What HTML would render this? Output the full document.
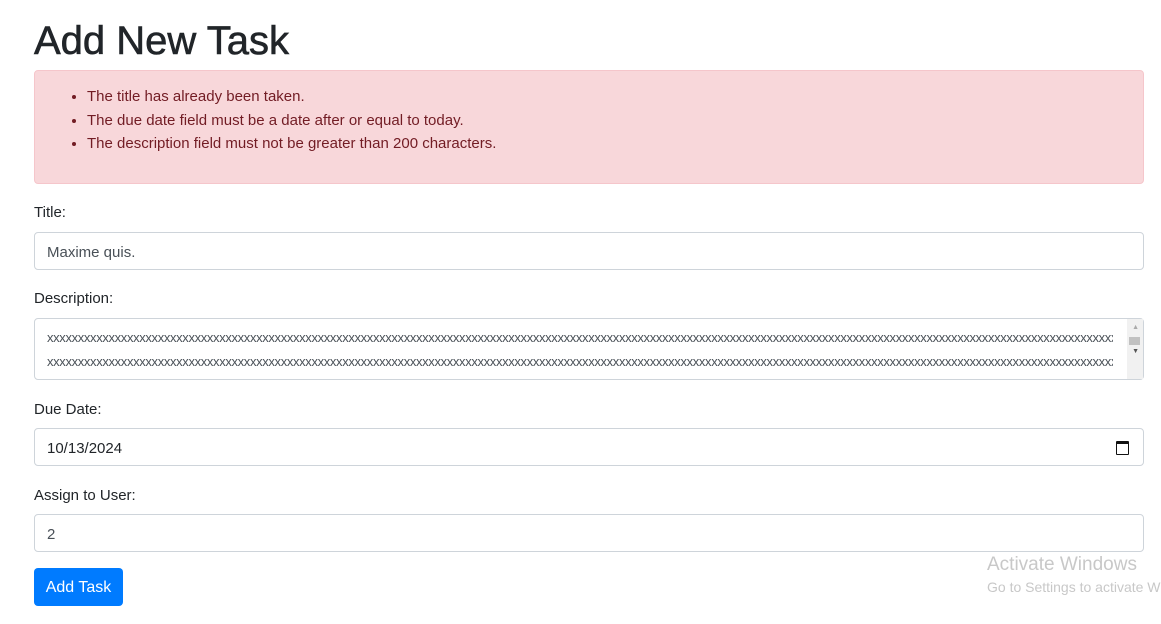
<!DOCTYPE html>
<html><head><style>
body{margin:0;background:#fff;font-family:"Liberation Sans",sans-serif;color:#212529;width:1161px;height:624px;overflow:hidden;position:relative}
.a{position:absolute}
h1{position:absolute;left:34px;top:15px;margin:0;font-size:40px;font-weight:500;line-height:52px;-webkit-text-stroke:0.6px #212529}
.alert{left:34px;top:70px;width:1108px;height:112px;background:#f8d7da;border:1px solid #f5c6cb;border-radius:4px;color:#721c24;font-size:15px}
.alert ul{margin:0;padding:0 0 0 52px;position:absolute;top:14px}
.alert li{line-height:23.5px}
.lbl{left:34px;font-size:15px}
.inp{left:34px;width:1110px;border:1px solid #ced4da;border-radius:4px;background:#fff;font-size:15px;color:#495057;box-sizing:border-box}
.btn{left:34px;top:568px;width:89px;height:38px;background:#007bff;border-radius:4px;color:#fff;font-size:16px;line-height:40px;text-align:center}
.xx{white-space:nowrap;overflow:hidden;width:1066px;font-size:13px;letter-spacing:-0.35px;color:#495057;position:absolute;left:12px}
</style></head><body>
<h1>Add New Task</h1>
<div class="a alert"><ul><li>The title has already been taken.</li><li>The due date field must be a date after or equal to today.</li><li>The description field must not be greater than 200 characters.</li></ul></div>
<div class="a lbl" style="top:204px">Title:</div>
<div class="a inp" style="top:232px;height:38px;line-height:40px;padding-left:12px">Maxime quis.</div>
<div class="a lbl" style="top:290px">Description:</div>
<div class="a inp" style="top:318px;height:62px">
<div class="xx" style="top:11px">xxxxxxxxxxxxxxxxxxxxxxxxxxxxxxxxxxxxxxxxxxxxxxxxxxxxxxxxxxxxxxxxxxxxxxxxxxxxxxxxxxxxxxxxxxxxxxxxxxxxxxxxxxxxxxxxxxxxxxxxxxxxxxxxxxxxxxxxxxxxxxxxxxxxxxxxxxxxxxxxxxxxxxxxxxxxxxx</div>
<div class="xx" style="top:35px">xxxxxxxxxxxxxxxxxxxxxxxxxxxxxxxxxxxxxxxxxxxxxxxxxxxxxxxxxxxxxxxxxxxxxxxxxxxxxxxxxxxxxxxxxxxxxxxxxxxxxxxxxxxxxxxxxxxxxxxxxxxxxxxxxxxxxxxxxxxxxxxxxxxxxxxxxxxxxxxxxxxxxxxxxxxxxxxxx</div>
<div class="a" style="right:0;top:0;width:16px;height:60px;background:#f1f1f1"></div>
<div class="a" style="right:3px;top:18px;width:11px;height:8px;background:#c1c1c1"></div>
<div class="a" style="right:4px;top:5px;font-size:7px;color:#aaa">▲</div>
<div class="a" style="right:4px;top:29px;font-size:7px;color:#555">▼</div>
</div>
<div class="a lbl" style="top:401px">Due Date:</div>
<div class="a inp" style="top:428px;height:38px;line-height:40px;padding-left:12px;color:#212529">10/13/2024
<div class="a" style="right:14px;top:12px;width:11px;height:10px;border:1.5px solid #111;border-top-width:3px;border-radius:1px"></div></div>
<div class="a lbl" style="top:487px">Assign to User:</div>
<div class="a inp" style="top:514px;height:38px;line-height:40px;padding-left:12px">2</div>
<div class="a btn">Add Task</div>
<div class="a" style="left:987px;top:554px;font-size:19px;color:#c8c8c8;white-space:nowrap">Activate Windows</div>
<div class="a" style="left:987px;top:579px;font-size:14px;color:#c8c8c8;white-space:nowrap">Go to Settings to activate Windows.</div>
</body></html>
